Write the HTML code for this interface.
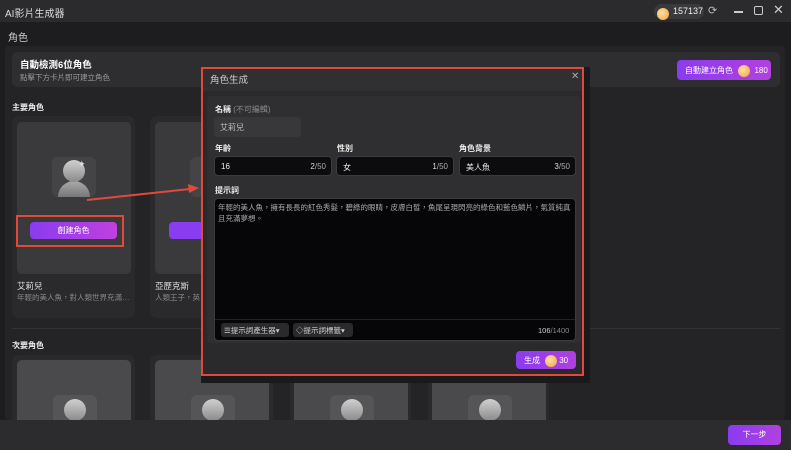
<!DOCTYPE html>
<html><head><meta charset="utf-8"><style>
*{margin:0;padding:0;box-sizing:border-box}
body{width:791px;height:450px;overflow:hidden;background:#1d1d20;font-family:"Liberation Sans","Noto Sans CJK TC",sans-serif;color:#ddd;position:relative}
.abs{position:absolute}
.t{font-size:9px}
.coin{display:inline-block;width:12px;height:12px;border-radius:50%;background:radial-gradient(circle at 40% 40%,#ffe0a0,#f0a040);vertical-align:middle}
.card{position:absolute;background:#2a2a2d;border-radius:7px}
.inner{position:absolute;background:#3a3a3d;border-radius:5px}
.av{position:absolute;width:44px;height:40px;background:#444447;border-radius:6px}
.head{position:absolute;width:22px;height:22px;border-radius:50%;background:linear-gradient(#d0d0d0,#8a8a8a)}
.inp{position:absolute;background:#0c0c0f;border:1px solid #3a3a40;border-radius:4px;font-size:8px;color:#eee;padding:5px 6px}
.cnt{position:absolute;right:5px;top:5px;color:#aaa}
.lbl{position:absolute;font-size:8px;font-weight:bold;color:#eee}
</style></head><body>
<!-- title bar -->
<div class="abs" style="left:0;top:0;width:791px;height:22px;background:#2b2b2e"></div>
<div class="abs" style="left:5px;top:5px;font-size:10px;color:#ddd">AI影片生成器</div>
<div class="abs" style="left:654px;top:4px;width:50px;height:15px;border-radius:8px;background:#3a3a3d"></div>
<div class="abs" style="left:657px;top:5px"><span class="coin"></span></div>
<div class="abs" style="left:673px;top:6px;font-size:9px;color:#eee">157137</div>
<div class="abs" style="left:708px;top:4px;font-size:11px;color:#bbb">⟳</div>
<div class="abs" style="left:734px;top:11px;width:9px;height:1.5px;background:#ccc"></div>
<div class="abs" style="left:754px;top:6px;width:9px;height:9px;border:1.5px solid #ccc;border-radius:2px"></div>
<div class="abs" style="left:773px;top:2px;font-size:13px;color:#ccc">✕</div>
<div class="abs" style="left:8px;top:29px;font-size:10px;color:#ccc">角色</div>
<!-- main container -->
<div class="abs" style="left:5px;top:46px;width:780px;height:374px;background:#242427;border-radius:4px"></div>
<div class="abs" style="left:12px;top:52px;width:768px;height:35px;background:#2e2e31;border-radius:5px"></div>
<div class="abs" style="left:20px;top:57px;font-size:9.5px;font-weight:bold;color:#fff">自動檢測6位角色</div>
<div class="abs" style="left:20px;top:72px;font-size:7.5px;color:#999">點擊下方卡片即可建立角色</div>
<div class="abs" style="left:677px;top:60px;width:94px;height:20px;border-radius:4px;background:linear-gradient(90deg,#8a3cf0,#b240e0);font-size:8px;color:#fff;padding:5px 0 0 8px">自動建立角色 <span class="coin" style="margin:0 2px 0 3px"></span> 180</div>
<div class="abs" style="left:12px;top:102px;font-size:8px;font-weight:bold;color:#eee">主要角色</div>
<!-- card 1 -->
<div class="card" style="left:12px;top:116px;width:123px;height:202px"></div>
<div class="inner" style="left:17px;top:122px;width:114px;height:152px"></div>
<div class="av" style="left:52px;top:157px"></div>
<div class="abs" style="left:58px;top:181px;width:32px;height:16px;border-radius:16px 16px 0 0;background:linear-gradient(#aaa,#777)"></div>
<div class="head" style="left:63px;top:160px"></div>
<div class="abs" style="left:78px;top:159px;font-size:9px;color:#ddd">✦</div>
<div class="abs" style="left:30px;top:222px;width:87px;height:17px;border-radius:4px;background:linear-gradient(90deg,#8a3cf0,#c040e0);font-size:8px;color:#fff;text-align:center;line-height:17px">創建角色</div>
<div class="abs" style="left:16px;top:215px;width:108px;height:32px;border:2px solid #e04a3a"></div>
<div class="abs" style="left:17px;top:280px;font-size:8.5px;color:#ddd">艾莉兒</div>
<div class="abs" style="left:17px;top:292px;font-size:7.5px;color:#888">年輕的美人魚，對人類世界充滿…</div>
<!-- card 2 -->
<div class="card" style="left:150px;top:116px;width:60px;height:202px"></div>
<div class="inner" style="left:155px;top:122px;width:50px;height:152px"></div>
<div class="av" style="left:190px;top:157px"></div>
<div class="abs" style="left:169px;top:222px;width:40px;height:17px;border-radius:4px;background:#8a3cf0"></div>
<div class="abs" style="left:155px;top:280px;font-size:8.5px;color:#ddd">亞歷克斯</div>
<div class="abs" style="left:155px;top:292px;font-size:7.5px;color:#888">人類王子，英</div>
<!-- arrow -->
<svg class="abs" style="left:0;top:0" width="791" height="450"><line x1="87" y1="200" x2="190" y2="189" stroke="#e04a3a" stroke-width="2"/><polygon points="199,188 188,184 189,193" fill="#e04a3a"/></svg>
<div class="abs" style="left:12px;top:328px;width:768px;height:1px;background:#333337"></div>
<div class="abs" style="left:12px;top:340px;font-size:8px;font-weight:bold;color:#eee">次要角色</div>
<!-- lower cards -->
<div class="card" style="left:12px;top:355px;width:123px;height:70px"></div><div class="inner" style="left:17px;top:360px;width:114px;height:65px;background:#4a4a4d"></div>
<div class="card" style="left:150px;top:355px;width:123px;height:70px"></div><div class="inner" style="left:155px;top:360px;width:114px;height:65px;background:#4a4a4d"></div>
<div class="card" style="left:290px;top:355px;width:121px;height:70px"></div><div class="inner" style="left:294px;top:360px;width:114px;height:65px;background:#4a4a4d"></div>
<div class="card" style="left:428px;top:355px;width:121px;height:70px"></div><div class="inner" style="left:432px;top:360px;width:114px;height:65px;background:#4a4a4d"></div>
<div class="av" style="left:53px;top:395px;background:#555558"></div><div class="head" style="left:64px;top:399px"></div>
<div class="av" style="left:191px;top:395px;background:#555558"></div><div class="head" style="left:202px;top:399px"></div>
<div class="av" style="left:330px;top:395px;background:#555558"></div><div class="head" style="left:341px;top:399px"></div>
<div class="av" style="left:468px;top:395px;background:#555558"></div><div class="head" style="left:479px;top:399px"></div>
<!-- bottom bar -->
<div class="abs" style="left:0;top:420px;width:791px;height:30px;background:#2c2c2f"></div>
<div class="abs" style="left:728px;top:425px;width:53px;height:20px;border-radius:4px;background:linear-gradient(90deg,#8a3cf0,#b040e0);font-size:8px;color:#fff;text-align:center;line-height:20px">下一步</div>
<!-- modal -->
<div class="abs" style="left:201px;top:67px;width:389px;height:316px;background:#1a1a1c"></div>
<div class="abs" style="left:201px;top:67px;width:383px;height:309px;background:#2a2a2d;border:2px solid #e04a3a"></div>
<div class="abs" style="left:203px;top:69px;width:379px;height:22px;background:#303033"></div>
<div class="abs" style="left:210px;top:72px;font-size:9.5px;color:#ccc">角色生成</div>
<div class="abs" style="left:571px;top:71px;font-size:10px;color:#aaa">✕</div>
<div class="abs" style="left:207px;top:96px;width:374px;height:247px;background:#2f2f32;border-radius:4px"></div>
<div class="lbl" style="left:215px;top:104px">名稱 <span style="color:#888;font-weight:normal">(不可編輯)</span></div>
<div class="abs" style="left:214px;top:117px;width:87px;height:20px;background:#38383b;border-radius:4px;font-size:8px;color:#bbb;padding:5px 6px">艾莉兒</div>
<div class="lbl" style="left:215px;top:143px">年齡</div>
<div class="lbl" style="left:337px;top:143px">性別</div>
<div class="lbl" style="left:459px;top:143px">角色背景</div>
<div class="inp" style="left:214px;top:156px;width:118px;height:20px">16<span class="cnt"><b style="color:#ddd;font-weight:normal">2</b>/50</span></div>
<div class="inp" style="left:336px;top:156px;width:118px;height:20px">女<span class="cnt"><b style="color:#ddd;font-weight:normal">1</b>/50</span></div>
<div class="inp" style="left:459px;top:156px;width:117px;height:20px">美人魚<span class="cnt"><b style="color:#ddd;font-weight:normal">3</b>/50</span></div>
<div class="lbl" style="left:215px;top:185px">提示詞</div>
<div class="abs" style="left:214px;top:198px;width:362px;height:143px;background:#060608;border:1px solid #3a3a40;border-radius:4px"></div>
<div class="abs" style="left:218px;top:202px;width:354px;font-size:7.5px;line-height:11px;color:#aaa">年輕的美人魚，擁有長長的紅色秀髮，碧綠的眼睛，皮膚白皙，魚尾呈現閃亮的綠色和藍色鱗片，氣質純真且充滿夢想。</div>
<div class="abs" style="left:215px;top:319px;width:360px;height:1px;background:#222226"></div>
<div class="abs" style="left:221px;top:323px;width:68px;height:14px;background:#2a2a2d;border-radius:3px;font-size:7.5px;color:#ccc;padding:2px 3px">☰提示詞產生器▾</div>
<div class="abs" style="left:293px;top:323px;width:60px;height:14px;background:#2a2a2d;border-radius:3px;font-size:7.5px;color:#ccc;padding:2px 3px">◇提示詞標籤▾</div>
<div class="abs" style="left:538px;top:326px;font-size:7.5px;color:#888"><span style="color:#ccc">106</span>/1400</div>
<div class="abs" style="left:516px;top:351px;width:60px;height:18px;border-radius:4px;background:linear-gradient(90deg,#8a3cf0,#b040e0);font-size:8px;color:#fff;padding:4px 0 0 8px">生成 <span class="coin" style="margin:0 2px 0 3px"></span>30</div>
</body></html>
